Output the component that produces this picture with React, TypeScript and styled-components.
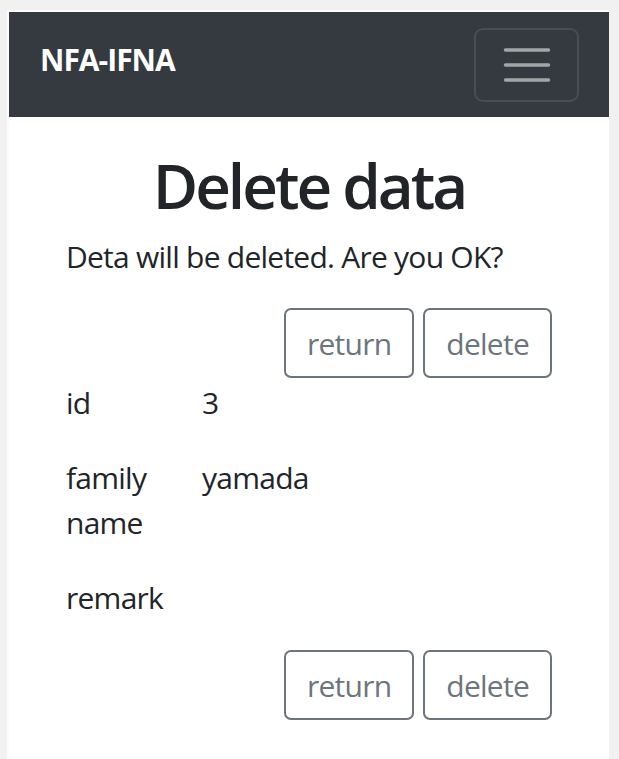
import React from 'react';
import styled, { createGlobalStyle } from 'styled-components';

const GlobalStyle = createGlobalStyle`
  body {
    margin: 0;
    background: #f1f1f1;
    font-family: "Open Sans", "Noto Sans", "Liberation Sans", sans-serif;
    color: #212529;
  }
`;

const Frame = styled.div`
  margin: 10px 10px 0 7px;
  border-left: 2px solid #fbfbfb;
  border-top: 2px solid #fbfbfb;
  background: #fff;
  min-height: 747px;
`;

const Navbar = styled.nav`
  height: 105px;
  background: #343a40;
  display: flex;
  align-items: center;
  justify-content: space-between;
  padding: 0 30px 0 31px;
`;

const Brand = styled.a`
  color: #fff;
  font-size: 30px;
  font-weight: 700;
  letter-spacing: -1px;
  line-height: 45px;
  margin-top: -10px;
  text-decoration: none;
`;

const Toggler = styled.button`
  width: 105px;
  height: 74px;
  border: 2px solid rgba(255, 255, 255, 0.1);
  border-radius: 9px;
  background: transparent;
  display: flex;
  align-items: center;
  justify-content: center;
  padding: 0;
`;

const Content = styled.main`
  padding: 30px 57px 0;
  font-size: 30px;
  line-height: 45px;
  letter-spacing: -0.75px;
`;

const Title = styled.h1`
  margin: 0 0 11px;
  text-align: center;
  font-size: 62px;
  font-weight: 600;
  letter-spacing: -3px;
  line-height: 76px;
`;

const Lead = styled.p`
  margin: 0 0 29px;
`;

const ButtonRow = styled.div`
  display: flex;
  justify-content: flex-end;
  gap: 9px;
  margin-bottom: 2px;
`;

const OutlineButton = styled.button`
  height: 70px;
  padding: 0 21px;
  border: 2px solid #6c757d;
  border-radius: 7px;
  background: transparent;
  color: #6c757d;
  font-family: inherit;
  font-size: 30px;
  letter-spacing: -0.75px;
  line-height: 45px;
`;

const Field = styled.div`
  display: grid;
  grid-template-columns: 136px 1fr;
  margin-bottom: 30px;
`;

const Label = styled.div`
  padding-right: 24px;
`;

const Value = styled.div``;

const MenuIcon = () => (
  <svg width="56" height="40" viewBox="0 0 56 40">
    <path
      d="M6.5 5h43M6.5 20h43M6.5 35h43"
      stroke="rgba(255,255,255,0.55)"
      strokeWidth="3.5"
      strokeLinecap="round"
    />
  </svg>
);

const Buttons = () => (
  <ButtonRow>
    <OutlineButton>return</OutlineButton>
    <OutlineButton>delete</OutlineButton>
  </ButtonRow>
);

const fields = [
  { label: 'id', value: '3' },
  { label: 'family name', value: 'yamada' },
  { label: 'remark', value: '' },
];

export default function App() {
  return (
    <>
      <GlobalStyle />
      <Frame>
        <Navbar>
          <Brand href="#">NFA-IFNA</Brand>
          <Toggler aria-label="menu">
            <MenuIcon />
          </Toggler>
        </Navbar>
        <Content>
          <Title>Delete data</Title>
          <Lead>Deta will be deleted. Are you OK?</Lead>
          <Buttons />
          {fields.map((f) => (
            <Field key={f.label}>
              <Label>{f.label}</Label>
              <Value>{f.value}</Value>
            </Field>
          ))}
          <Buttons />
        </Content>
      </Frame>
    </>
  );
}
